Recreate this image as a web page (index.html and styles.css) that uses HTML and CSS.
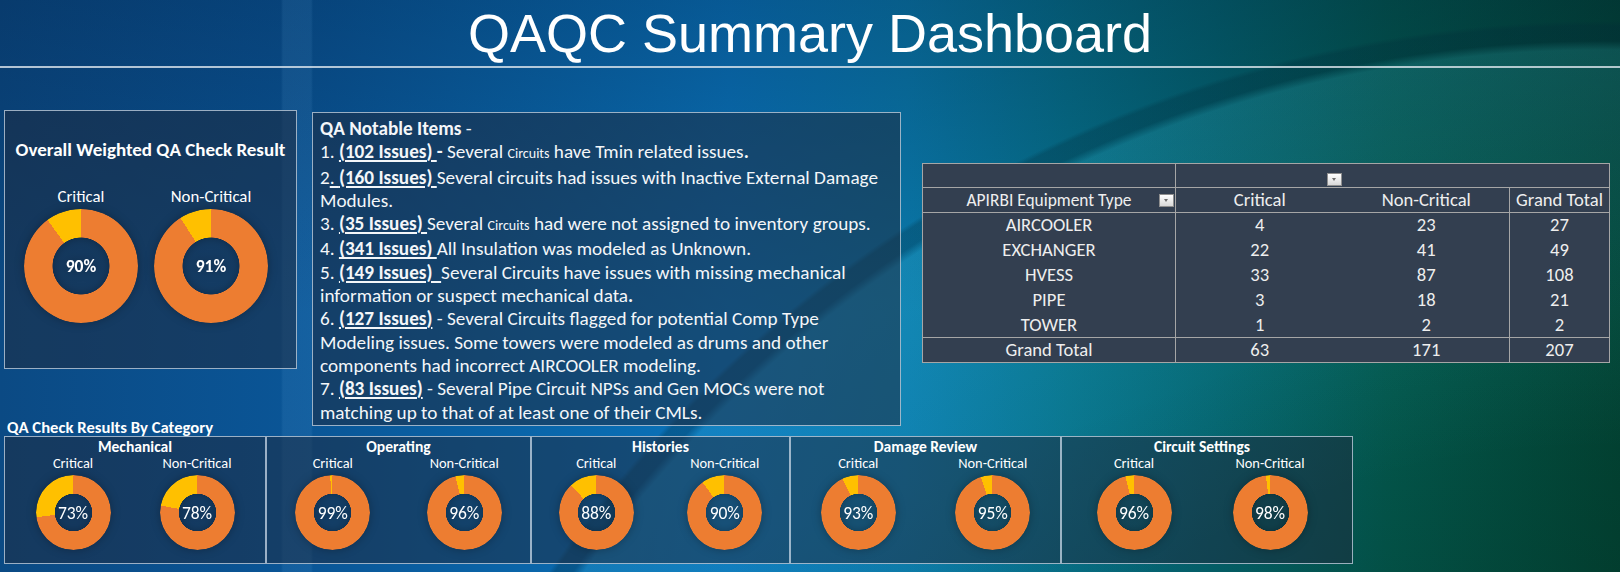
FILE: index.html
```html
<!DOCTYPE html>
<html lang="en">
<head>
<meta charset="utf-8">
<title>QAQC Summary Dashboard</title>
<link rel="stylesheet" href="styles.css">
</head>
<body>
<header class="hdr"><h1>QAQC Summary Dashboard</h1></header>
<main class="board">
  <section class="overall">
    <h2>Overall Weighted QA Check Result</h2>
    <div class="pair">
      <div class="dcol"><div class="lbl">Critical</div><div class="donut big" style="--p:90%"><span>90%</span></div></div>
      <div class="dcol"><div class="lbl">Non-Critical</div><div class="donut big" style="--p:91%"><span>91%</span></div></div>
    </div>
  </section>

  <section class="notes">
    <p><b>QA Notable Items</b> -</p>
    <p>1. <b><u>(102 Issues) </u>- </b>Several <small>Circuits</small> have Tmin related issues<b>.</b></p>
    <p>2<u>. <b>(160 Issues) </b></u>Several circuits had issues with Inactive External Damage<br>Modules.</p>
    <p>3. <b><u>(35 Issues) </u></b>Several <small>Circuits</small> had were not assigned to inventory groups.</p>
    <p>4. <b><u>(341 Issues) </u></b>All Insulation was modeled as Unknown.</p>
    <p>5. <b><u>(149 Issues)&nbsp; </u></b>Several Circuits have issues with missing mechanical<br>information or suspect mechanical data<b>.</b></p>
    <p>6. <b><u>(127 Issues)</u></b> - Several Circuits flagged for potential Comp Type<br>Modeling issues. Some towers were modeled as drums and other<br>components had incorrect AIRCOOLER modeling.</p>
    <p>7. <b><u>(83 Issues)</u></b> - Several Pipe Circuit NPSs and Gen MOCs were not<br>matching up to that of at least one of their CMLs.</p>
  </section>

  <div class="pivot-wrap">
    <table class="pivot">
      <colgroup><col class="c1"><col class="c2"><col class="c3"><col class="c4"></colgroup>
      <tr class="r-top"><td class="k"></td><td class="fcell"><span class="dd"></span></td><td colspan="2"></td></tr>
      <tr class="r-head"><td class="k kh">APIRBI Equipment Type<span class="dd dd-side"></span></td><td>Critical</td><td>Non-Critical</td><td class="g">Grand Total</td></tr>
      <tr><td class="k">AIRCOOLER</td><td>4</td><td>23</td><td class="g">27</td></tr>
      <tr><td class="k">EXCHANGER</td><td>22</td><td>41</td><td class="g">49</td></tr>
      <tr><td class="k">HVESS</td><td>33</td><td>87</td><td class="g">108</td></tr>
      <tr><td class="k">PIPE</td><td>3</td><td>18</td><td class="g">21</td></tr>
      <tr><td class="k">TOWER</td><td>1</td><td>2</td><td class="g">2</td></tr>
      <tr class="r-total"><td class="k">Grand Total</td><td>63</td><td>171</td><td class="g">207</td></tr>
    </table>
  </div>

  <div class="cat-label">QA Check Results By Category</div>

  <div class="cats">
    <section class="cat w1">
      <h3>Mechanical</h3>
      <div class="pair">
        <div class="dcol"><div class="lbl">Critical</div><div class="donut small" style="--p:73%"><span>73%</span></div></div>
        <div class="dcol"><div class="lbl">Non-Critical</div><div class="donut small" style="--p:78%"><span>78%</span></div></div>
      </div>
    </section>
    <section class="cat w2">
      <h3>Operating</h3>
      <div class="pair">
        <div class="dcol"><div class="lbl">Critical</div><div class="donut small" style="--p:99%"><span>99%</span></div></div>
        <div class="dcol"><div class="lbl">Non-Critical</div><div class="donut small" style="--p:96%"><span>96%</span></div></div>
      </div>
    </section>
    <section class="cat w3">
      <h3>Histories</h3>
      <div class="pair">
        <div class="dcol"><div class="lbl">Critical</div><div class="donut small" style="--p:88%"><span>88%</span></div></div>
        <div class="dcol"><div class="lbl">Non-Critical</div><div class="donut small" style="--p:90%"><span>90%</span></div></div>
      </div>
    </section>
    <section class="cat w4">
      <h3>Damage Review</h3>
      <div class="pair">
        <div class="dcol"><div class="lbl">Critical</div><div class="donut small" style="--p:93%"><span>93%</span></div></div>
        <div class="dcol"><div class="lbl">Non-Critical</div><div class="donut small" style="--p:95%"><span>95%</span></div></div>
      </div>
    </section>
    <section class="cat w5">
      <h3>Circuit Settings</h3>
      <div class="pair">
        <div class="dcol"><div class="lbl">Critical</div><div class="donut small" style="--p:96%"><span>96%</span></div></div>
        <div class="dcol"><div class="lbl">Non-Critical</div><div class="donut small" style="--p:98%"><span>98%</span></div></div>
      </div>
    </section>
  </div>
</main>
</body>
</html>
```
FILE: styles.css
```css
* { box-sizing: border-box; }

html, body {
  margin: 0;
  padding: 0;
}

body {
  width: 1620px;
  height: 572px;
  overflow: hidden;
  color: #ffffff;
  font-family: Carlito, Calibri, Lato, "Noto Sans", sans-serif;
  background:
    linear-gradient(90deg, transparent 281px, rgba(130, 200, 250, 0.09) 283px, rgba(130, 200, 250, 0.09) 311px, transparent 313px),
    radial-gradient(circle 1300px at 1600px 1300px, rgba(70, 210, 230, 0) 850px, rgba(70, 210, 230, 0.16) 1250px, rgba(0, 40, 55, 0.28) 1259px, rgba(0, 40, 55, 0.28) 1274px, rgba(0, 40, 55, 0) 1279px),
    linear-gradient(160deg, transparent 70%, rgba(0, 30, 20, 0.2) 100%),
    linear-gradient(180deg, rgba(0, 20, 50, 0.28) 0%, rgba(0, 20, 50, 0) 55%),
    linear-gradient(90deg, #0b4a84 0%, #0a5596 18%, #0a66aa 33%, #0a74bb 45%, #0a7aac 56%, #06718a 66%, #046570 75%, #03584d 86%, #024535 100%);
}

/* ---------- header ---------- */
.hdr {
  height: 68px;
  border-bottom: 2px solid rgba(225, 233, 240, 0.78);
}

.hdr h1 {
  margin: 0;
  padding-top: 3px;
  text-align: center;
  font-family: "Liberation Sans", Arial, sans-serif;
  font-weight: normal;
  font-size: 54px;
  line-height: 60px;
  color: #ffffff;
}

/* ---------- board grid ---------- */
.board {
  display: grid;
  grid-template-columns: 308px 610px 1fr;
  grid-template-rows: 350px 18px 128px;
}

.overall,
.notes,
.cat {
  background: rgba(30, 42, 62, 0.52);
  border: 1px solid rgba(200, 215, 230, 0.75);
}

/* ---------- overall panel ---------- */
.overall {
  grid-column: 1;
  grid-row: 1;
  align-self: start;
  margin: 42px 0 0 4px;
  width: 293px;
  height: 259px;
  padding-top: 28px;
}

.overall h2 {
  margin: 0;
  text-align: center;
  font-size: 19px;
  line-height: 22px;
  font-weight: bold;
}

.overall .pair {
  display: flex;
  margin-top: 26px;
  padding-left: 11px;
}

.overall .dcol {
  width: 130px;
}

.overall .lbl {
  font-size: 16.8px;
  line-height: 20px;
  margin-bottom: 2px;
}

/* ---------- shared donut ---------- */
.dcol {
  display: flex;
  flex-direction: column;
  align-items: center;
}

.lbl {
  text-align: center;
  white-space: nowrap;
  color: #ffffff;
}

.donut {
  position: relative;
  display: flex;
  align-items: center;
  justify-content: center;
  border-radius: 50%;
  filter: drop-shadow(0 0 5px rgba(0, 0, 0, 0.28));
}

.donut::before {
  content: "";
  position: absolute;
  inset: 0;
  border-radius: 50%;
  background: conic-gradient(#ed7d31 0 var(--p), #ffc000 0 100%);
  -webkit-mask: radial-gradient(circle closest-side, transparent 0 49.5%, #000 50.5%);
  mask: radial-gradient(circle closest-side, transparent 0 49.5%, #000 50.5%);
}

.donut span {
  position: relative;
  color: #ffffff;
}

.donut.big {
  width: 114px;
  height: 114px;
}

.donut.big span {
  font-size: 17.5px;
  font-weight: bold;
}

.donut.small {
  width: 75px;
  height: 75px;
}

.donut.small span {
  font-size: 17.5px;
}

/* ---------- notable items ---------- */
.notes {
  grid-column: 2;
  grid-row: 1 / 3;
  align-self: start;
  margin: 44px 0 0 4px;
  width: 589px;
  height: 314px;
  padding: 4px 0 0 7px;
  font-size: 19.2px;
  line-height: 23.3px;
  color: #f3f6f9;
  white-space: nowrap;
}

.notes p {
  margin: 0;
}

.notes u {
  text-decoration-thickness: 1.5px;
  text-underline-offset: 2px;
}

.notes small {
  font-size: 14px;
}

/* ---------- pivot table ---------- */
.pivot-wrap {
  grid-column: 3;
  grid-row: 1;
  align-self: start;
  margin: 95px 0 0 4px;
}

.pivot {
  border-collapse: collapse;
  table-layout: fixed;
  width: 687px;
  background: #333f50;
  color: #eeeeee;
  font-size: 18.6px;
  border: 1px solid #a6a6a6;
}

.pivot .c1 { width: 253px; }
.pivot .c2 { width: 168px; }
.pivot .c3 { width: 166px; }
.pivot .c4 { width: 100px; }

.pivot td {
  padding: 0;
  height: 25px;
  text-align: center;
  vertical-align: middle;
  line-height: 20px;
  white-space: nowrap;
}

.pivot .r-top td {
  height: 24px;
  border-bottom: 1px solid #a6a6a6;
}

.pivot .r-head td {
  border-bottom: 1px solid #a6a6a6;
}

.pivot .r-total td {
  border-top: 1px solid #a6a6a6;
}

.pivot td.k {
  border-right: 1px solid #a6a6a6;
}

.pivot td.g {
  border-left: 1px solid #a6a6a6;
}

.pivot td.kh {
  position: relative;
  font-size: 17.4px;
}

.pivot td.fcell {
  text-align: right;
  vertical-align: bottom;
  padding: 0 2px 1px 0;
  line-height: 0;
}

.dd {
  display: inline-block;
  position: relative;
  width: 15px;
  height: 13px;
  border: 1px solid #8f8f8f;
  background: linear-gradient(#ffffff, #d9d9d9);
}

.dd::after {
  content: "";
  position: absolute;
  left: 4px;
  top: 4px;
  border-left: 2.5px solid transparent;
  border-right: 2.5px solid transparent;
  border-top: 3px solid #6d6d6d;
}

.dd-side {
  position: absolute;
  right: 1px;
  top: 50%;
  margin-top: -6px;
}

/* ---------- categories ---------- */
.cat-label {
  grid-column: 1 / 3;
  grid-row: 2;
  padding-left: 7px;
  font-size: 16.7px;
  line-height: 18px;
  font-weight: bold;
  white-space: nowrap;
}

.cats {
  grid-column: 1 / -1;
  grid-row: 3;
  display: flex;
  padding-left: 4px;
}

.cat {
  height: 128px;
  padding-top: 2px;
}

.cat.w1 { width: 262px; padding-left: 6px; padding-right: 6px; }
.cat.w2 { width: 265px; }
.cat.w3 { width: 259px; }
.cat.w4 { width: 271px; }
.cat.w5 { width: 292px; padding-left: 4px; padding-right: 14px; }

.cat h3 {
  margin: 0;
  text-align: center;
  font-size: 15.6px;
  line-height: 16px;
  font-weight: bold;
}

.cat .pair {
  display: flex;
}

.cat .dcol {
  flex: 1;
}

.cat .lbl {
  font-size: 14.4px;
  line-height: 16px;
  margin-bottom: 4px;
}
```
